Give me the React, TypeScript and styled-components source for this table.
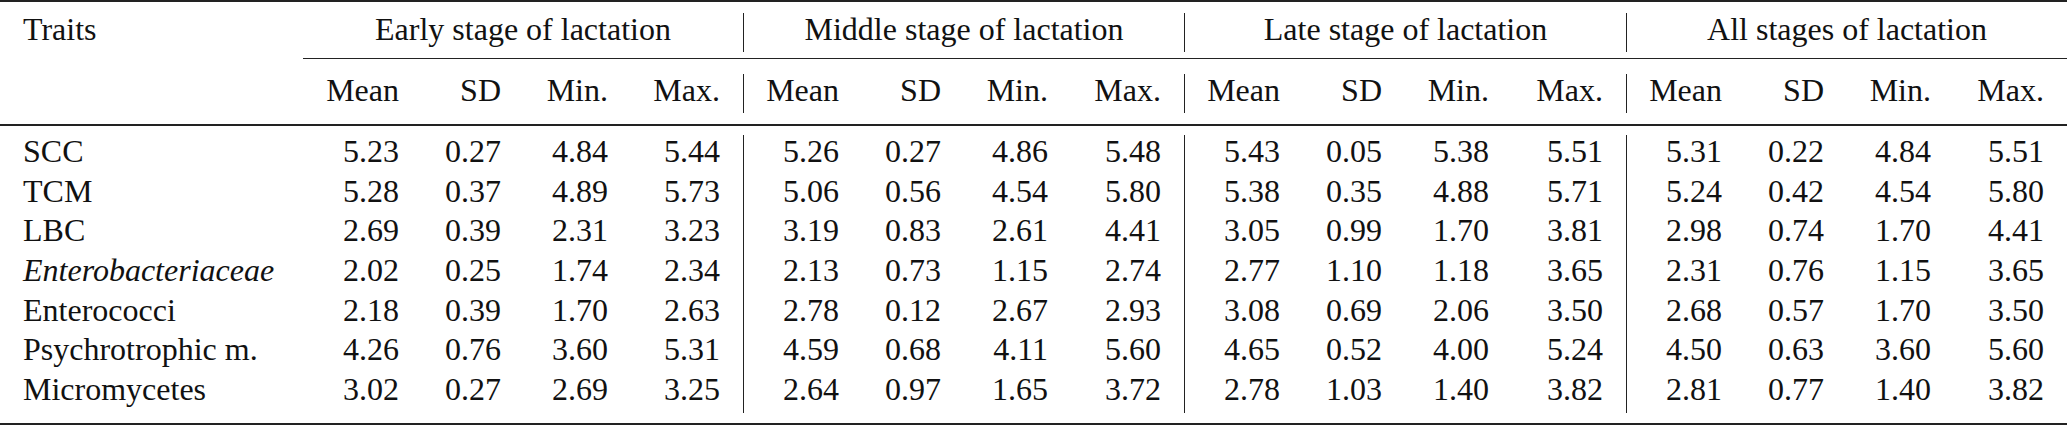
import styled, { createGlobalStyle } from "styled-components";

const GlobalStyle = createGlobalStyle`
  html, body {
    margin: 0;
    padding: 0;
    background: #ffffff;
  }
`;

// column widths inside one stage group: Mean, SD, Min., Max. (last one takes the rest)
const LABEL_WIDTH = 303;
const GROUP_WIDTHS = [440, 441, 442, 441];
const SUB_WIDTHS = [119, 102, 107];

const subTemplate = GROUP_WIDTHS.map((w) => {
  const rest = w - SUB_WIDTHS.reduce((a, b) => a + b, 0);
  return [...SUB_WIDTHS, rest].map((x) => `${x}px`).join(" ");
}).join(" ");

const groupTemplate = GROUP_WIDTHS.map((w) => `${w}px`).join(" ");

const RULE = "#222222";

const Table = styled.div`
  width: 2067px;
  font-family: "Liberation Serif", "Times New Roman", "DejaVu Serif", serif;
  font-size: 32px;
  color: #111111;
  border-top: 2px solid ${RULE};
  display: flex;
  flex-direction: column;
`;

const GroupRow = styled.div`
  display: grid;
  grid-template-columns: ${LABEL_WIDTH}px ${groupTemplate};
  padding: 11px 0 6px;
`;

const ColumnRow = styled.div`
  display: grid;
  grid-template-columns: ${LABEL_WIDTH}px ${subTemplate};
  padding: 15px 0 11px;
`;

const CmidRule = styled.div`
  height: 1px;
  margin-left: ${LABEL_WIDTH}px;
  background: ${RULE};
`;

const MidRule = styled.div`
  height: 2px;
  background: ${RULE};
`;

const BottomRule = styled.div`
  height: 2px;
  background: ${RULE};
`;

const Body = styled.div`
  display: flex;
  flex-direction: column;
  padding: 9px 0 10px;
`;

const DataRow = styled.div`
  display: grid;
  grid-template-columns: ${LABEL_WIDTH}px ${subTemplate};
  height: 39.7px;
`;

const LabelCell = styled.div<{ $italic?: boolean }>`
  box-sizing: border-box;
  padding: 0 0 0 23px;
  line-height: 32px;
  white-space: nowrap;
  font-style: ${(p) => (p.$italic ? "italic" : "normal")};
`;

const GroupCell = styled.div<{ $bar: boolean }>`
  box-sizing: border-box;
  height: 39px;
  line-height: 32px;
  text-align: center;
  white-space: nowrap;
  border-left: ${(p) => (p.$bar ? `1px solid ${RULE}` : "none")};
`;

const NumCell = styled.div<{ $bar: boolean; $tall?: boolean }>`
  box-sizing: border-box;
  height: ${(p) => (p.$tall ? "39.7px" : "39px")};
  padding-right: 23px;
  line-height: 32px;
  text-align: right;
  white-space: nowrap;
  border-left: ${(p) => (p.$bar ? `1px solid ${RULE}` : "none")};
`;

const stages = [
  "Early stage of lactation",
  "Middle stage of lactation",
  "Late stage of lactation",
  "All stages of lactation",
];

const stats = ["Mean", "SD", "Min.", "Max."];

type Row = { trait: string; italic?: boolean; values: string[] };

const rows: Row[] = [
  {
    trait: "SCC",
    values: "5.23 0.27 4.84 5.44 5.26 0.27 4.86 5.48 5.43 0.05 5.38 5.51 5.31 0.22 4.84 5.51".split(" "),
  },
  {
    trait: "TCM",
    values: "5.28 0.37 4.89 5.73 5.06 0.56 4.54 5.80 5.38 0.35 4.88 5.71 5.24 0.42 4.54 5.80".split(" "),
  },
  {
    trait: "LBC",
    values: "2.69 0.39 2.31 3.23 3.19 0.83 2.61 4.41 3.05 0.99 1.70 3.81 2.98 0.74 1.70 4.41".split(" "),
  },
  {
    trait: "Enterobacteriaceae",
    italic: true,
    values: "2.02 0.25 1.74 2.34 2.13 0.73 1.15 2.74 2.77 1.10 1.18 3.65 2.31 0.76 1.15 3.65".split(" "),
  },
  {
    trait: "Enterococci",
    values: "2.18 0.39 1.70 2.63 2.78 0.12 2.67 2.93 3.08 0.69 2.06 3.50 2.68 0.57 1.70 3.50".split(" "),
  },
  {
    trait: "Psychrotrophic m.",
    values: "4.26 0.76 3.60 5.31 4.59 0.68 4.11 5.60 4.65 0.52 4.00 5.24 4.50 0.63 3.60 5.60".split(" "),
  },
  {
    trait: "Micromycetes",
    values: "3.02 0.27 2.69 3.25 2.64 0.97 1.65 3.72 2.78 1.03 1.40 3.82 2.81 0.77 1.40 3.82".split(" "),
  },
];

// a bar sits left of every stage group except the first
const hasBar = (i: number) => i > 0 && i % 4 === 0;

const App = () => {
  return (
    <>
      <GlobalStyle />
      <Table>
        <GroupRow>
          <LabelCell>Traits</LabelCell>
          {stages.map((s, i) => (
            <GroupCell key={s} $bar={i > 0}>
              {s}
            </GroupCell>
          ))}
        </GroupRow>
        <CmidRule />
        <ColumnRow>
          <LabelCell />
          {stages.flatMap((_, g) =>
            stats.map((st, j) => (
              <NumCell key={`${g}-${st}`} $bar={hasBar(g * 4 + j)}>
                {st}
              </NumCell>
            ))
          )}
        </ColumnRow>
        <MidRule />
        <Body>
          {rows.map((r) => (
            <DataRow key={r.trait}>
              <LabelCell $italic={r.italic}>{r.trait}</LabelCell>
              {r.values.map((v, i) => (
                <NumCell key={i} $bar={hasBar(i)} $tall>
                  {v}
                </NumCell>
              ))}
            </DataRow>
          ))}
        </Body>
        <BottomRule />
      </Table>
    </>
  );
};

export default App;
